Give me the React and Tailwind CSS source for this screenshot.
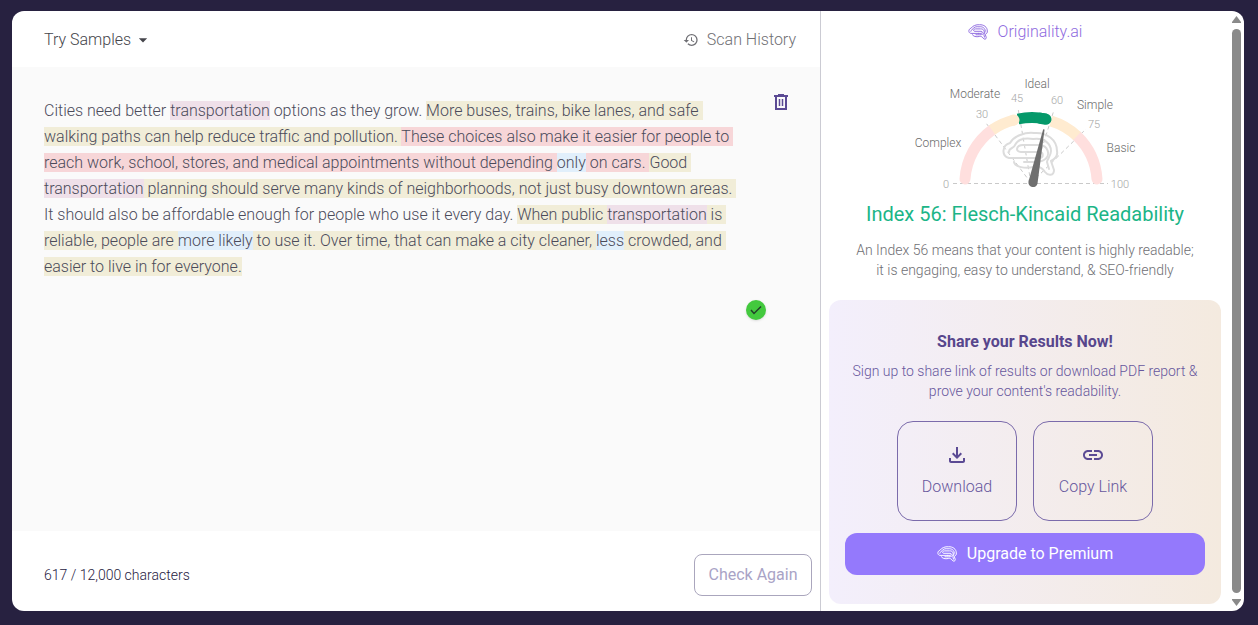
import { MdHistory, MdOutlineFileDownload, MdLink, MdArrowDropDown } from 'react-icons/md';

const tones = {
  plain: '',
  hard: 'bg-[#f1edd8]',
  veryHard: 'bg-[#f7d6d8]',
  long: 'bg-[#efe0e9]',
  adverb: 'bg-[#e1effb]',
};

const lines = [
  [['plain', 'Cities need better '], ['long', 'transportation'], ['plain', ' options as they grow. '], ['hard', 'More buses, trains, bike lanes, and safe ']],
  [['hard', 'walking paths can help reduce traffic and pollution. '], ['veryHard', 'These choices also make it easier for people to ']],
  [['veryHard', 'reach work, school, stores, and medical appointments without depending '], ['adverb', 'only'], ['veryHard', ' on cars. '], ['hard', 'Good ']],
  [['long', 'transportation'], ['hard', ' planning should serve many kinds of neighborhoods, not just busy downtown areas. ']],
  [['plain', 'It should also be affordable enough for people who use it every day. '], ['hard', 'When public '], ['long', 'transportation'], ['hard', ' is ']],
  [['hard', 'reliable, people are '], ['adverb', 'more likely'], ['hard', ' to use it. Over time, that can make a city cleaner, '], ['adverb', 'less'], ['hard', ' crowded, and ']],
  [['hard', 'easier to live in for everyone.']],
];

const BrainPaths = () => (
  <>
    <path d="M30 27H8C0 25 1 14 9 12C13 5 24 1 33 2C46 1 56 9 56 20C57 25 54 28 50 30L53 39C53 45 47 45 44 41C41 36 37 35 33 36C24 38 14 36 13 31" />
    <path d="M30 27H38C43 27 43 21 38 21H20C14 21 15 14 22 14H36C48 13 50 25 43 29C39 32 31 31 23 31" />
    <path d="M8 21C8 16 13 18 14 14C17 8 25 7 32 8C43 6 50 13 50 20C50 25 46 28 46 31L48 38" />
  </>
);

const BrainIcon = () => (
  <svg viewBox="0 0 58 46" className="h-4 w-5" fill="none" stroke="currentColor" strokeWidth="2.8" strokeLinecap="round" strokeLinejoin="round" aria-hidden="true">
    <BrainPaths />
  </svg>
);

const TrashIcon = () => (
  <svg width="14" height="16" viewBox="0 0 14 16" fill="none" stroke="currentColor" strokeWidth="2" aria-hidden="true">
    <path d="M2 2V15H12V2M0 2H14M4 1H10" />
    <path d="M5.5 5V12M8.5 5V12" strokeWidth="1.5" />
  </svg>
);

const Gauge = () => (
  <svg width="240" height="118" viewBox="905 75 240 118" fill="none" role="img" aria-label="Readability gauge">
    <g stroke="#c9c9c9" strokeWidth="1" strokeDasharray="4 3">
      <path d="M953 183.500H1108" />
      <path d="M1031 183L986 123M1031 183L1018 108M1031 183L1054 110M1031 183L1086 129" />
    </g>
    <g stroke="#dcdcdc" strokeWidth="2" strokeLinecap="round" strokeLinejoin="round" transform="translate(1001 131)">
      <BrainPaths />
    </g>
    <g strokeWidth="11">
      <path d="M965 179A66 66 0 0 1 992 130" stroke="#ffdfde" strokeLinecap="round" />
      <path d="M1097 179A66 66 0 0 0 1077 136" stroke="#ffdfde" strokeLinecap="round" />
      <path d="M1051 121A66 66 0 0 1 1077 136" stroke="#ffebd0" />
      <path d="M1018 119A66 66 0 0 1 1046 119" stroke="#05996a" />
      <path d="M1040 118.300L1046 119.300" stroke="#05996a" strokeLinecap="round" />
      <path d="M992 130A66 66 0 0 1 1014 120" stroke="#ffebd0" />
      <path d="M1013 120.300L1014 120" stroke="#ffebd0" strokeLinecap="round" />
    </g>
    <path d="M1043 130L1028.500 181.500A4.500 4.500 0 0 0 1037.500 183.500L1044.500 130Q1044 128 1043 130Z" fill="#6f6f6f" />
    <g fill="#6b6b6b" fontSize="12" textAnchor="middle">
      <text x="938" y="147">Complex</text>
      <text x="975" y="98">Moderate</text>
      <text x="1037" y="88">Ideal</text>
      <text x="1095" y="109">Simple</text>
      <text x="1121" y="152">Basic</text>
    </g>
    <g fill="#a5a5a5" fontSize="11" textAnchor="middle">
      <text x="946" y="188">0</text>
      <text x="982" y="118">30</text>
      <text x="1017" y="102">45</text>
      <text x="1057" y="104">60</text>
      <text x="1094" y="128">75</text>
      <text x="1120" y="188">100</text>
    </g>
  </svg>
);

const ShareButton = ({ icon: Icon, label }) => (
  <button type="button" className="flex h-[100px] w-[120px] flex-col items-center justify-center gap-2 rounded-2xl border border-[#7b6bab]">
    <Icon className="size-6 text-[#5b4a94]" />
    <span className="leading-6">{label}</span>
  </button>
);

const Editor = () => (
  <main className="flex min-w-0 flex-1 flex-col">
    <header className="flex h-14 items-center justify-between pt-0.5 pr-6 pl-8">
      <button type="button" className="flex items-center gap-0.5 text-[#45454b]">
        Try Samples
        <MdArrowDropDown className="size-5" />
      </button>
      <button type="button" className="flex items-center gap-2 text-[#6f6f74]">
        <MdHistory className="size-4" />
        Scan History
      </button>
    </header>

    <section className="flex flex-1 items-start justify-between bg-[#fafafa] pr-8 pl-8">
      <div className="pt-[31px]">
        <div className="leading-[26px] whitespace-pre text-[#4b4b5a]">
          {lines.map((line, i) => (
            <p key={i}>
              {line.map(([tone, text], j) => (
                <span key={j} className={tones[tone]}>{text}</span>
              ))}
            </p>
          ))}
        </div>
        <div className="flex w-[722px] justify-end pt-5">
          <span className="flex size-5 items-center justify-center rounded-full bg-[#43c93e] shadow">
            <svg width="12" height="10" viewBox="0 0 12 10" fill="none" stroke="#22402a" strokeWidth="1.5" aria-hidden="true">
              <path d="M1 5L4 8.500L11 1.500" />
            </svg>
          </span>
        </div>
      </div>
      <button type="button" aria-label="Delete text" className="-ml-6 pt-[27px] text-[#5b4a94]">
        <TrashIcon />
      </button>
    </section>

    <footer className="flex h-20 items-center justify-between pt-2 pr-2 pl-8">
      <p className="text-sm text-[#27213f]">617 / 12,000 characters</p>
      <button type="button" className="h-[42px] w-[118px] rounded-lg border border-[#aaa6bd] font-normal text-[#a9a3c6]">
        Check Again
      </button>
    </footer>
  </main>
);

const Results = () => (
  <aside className="flex w-[408px] flex-col items-center px-2 pt-[9px]">
    <a href="#" className="flex items-center gap-2.5 leading-6 text-[#8f6be0]">
      <BrainIcon />
      Originality.ai
    </a>
    <div className="mt-[31px]">
      <Gauge />
    </div>
    <h2 className="mt-[7px] text-xl leading-7 font-normal text-[#1cb587]">Index 56: Flesch-Kincaid Readability</h2>
    <p className="mt-3 text-center text-sm leading-5 text-[#6f6f74]">
      An Index 56 means that your content is highly readable;
      <br />
      it is engaging, easy to understand, &amp; SEO-friendly
    </p>

    <section className="mt-5 flex h-[304px] w-full flex-col items-center rounded-xl bg-linear-to-r from-[#f3effc] to-[#f4eadf] px-4 pt-[30px] text-[#67579d]">
      <h3 className="leading-6 font-bold text-[#57468c]">Share your Results Now!</h3>
      <p className="mt-[7px] text-center text-sm leading-5">
        Sign up to share link of results or download PDF report &amp;
        <br />
        prove your content&apos;s readability.
      </p>
      <div className="mt-5 flex gap-4">
        <ShareButton icon={MdOutlineFileDownload} label="Download" />
        <ShareButton icon={MdLink} label="Copy Link" />
      </div>
      <button type="button" className="mt-3 flex h-[42px] w-full items-center justify-center gap-2.5 rounded-xl bg-[#9479fc] font-normal text-white">
        <BrainIcon />
        Upgrade to Premium
      </button>
    </section>
  </aside>
);

const Scrollbar = () => (
  <div className="flex w-[15px] flex-col items-center gap-[6px] py-[5px] text-[#8a8a8a]" aria-hidden="true">
    <svg width="9" height="7" viewBox="0 0 9 7" fill="currentColor"><path d="M4.500 0L9 6V7H0V6Z" /></svg>
    <div className="w-[9px] flex-1 rounded-full bg-[#8a8a8a]" />
    <svg width="9" height="7" viewBox="0 0 9 7" fill="currentColor"><path d="M0 0H9V1L4.500 7L0 1Z" /></svg>
  </div>
);

const App = () => {
  return (
    <div className="min-h-screen bg-[#272140] pt-[11px] pr-[14px] pb-[14px] pl-3 font-['Roboto',sans-serif] font-light">
      <div className="flex min-h-[600px] overflow-hidden rounded-xl bg-white">
        <Editor />
        <div className="w-px bg-[#cbcbd3]" />
        <Results />
        <Scrollbar />
      </div>
    </div>
  );
};

export default App;
